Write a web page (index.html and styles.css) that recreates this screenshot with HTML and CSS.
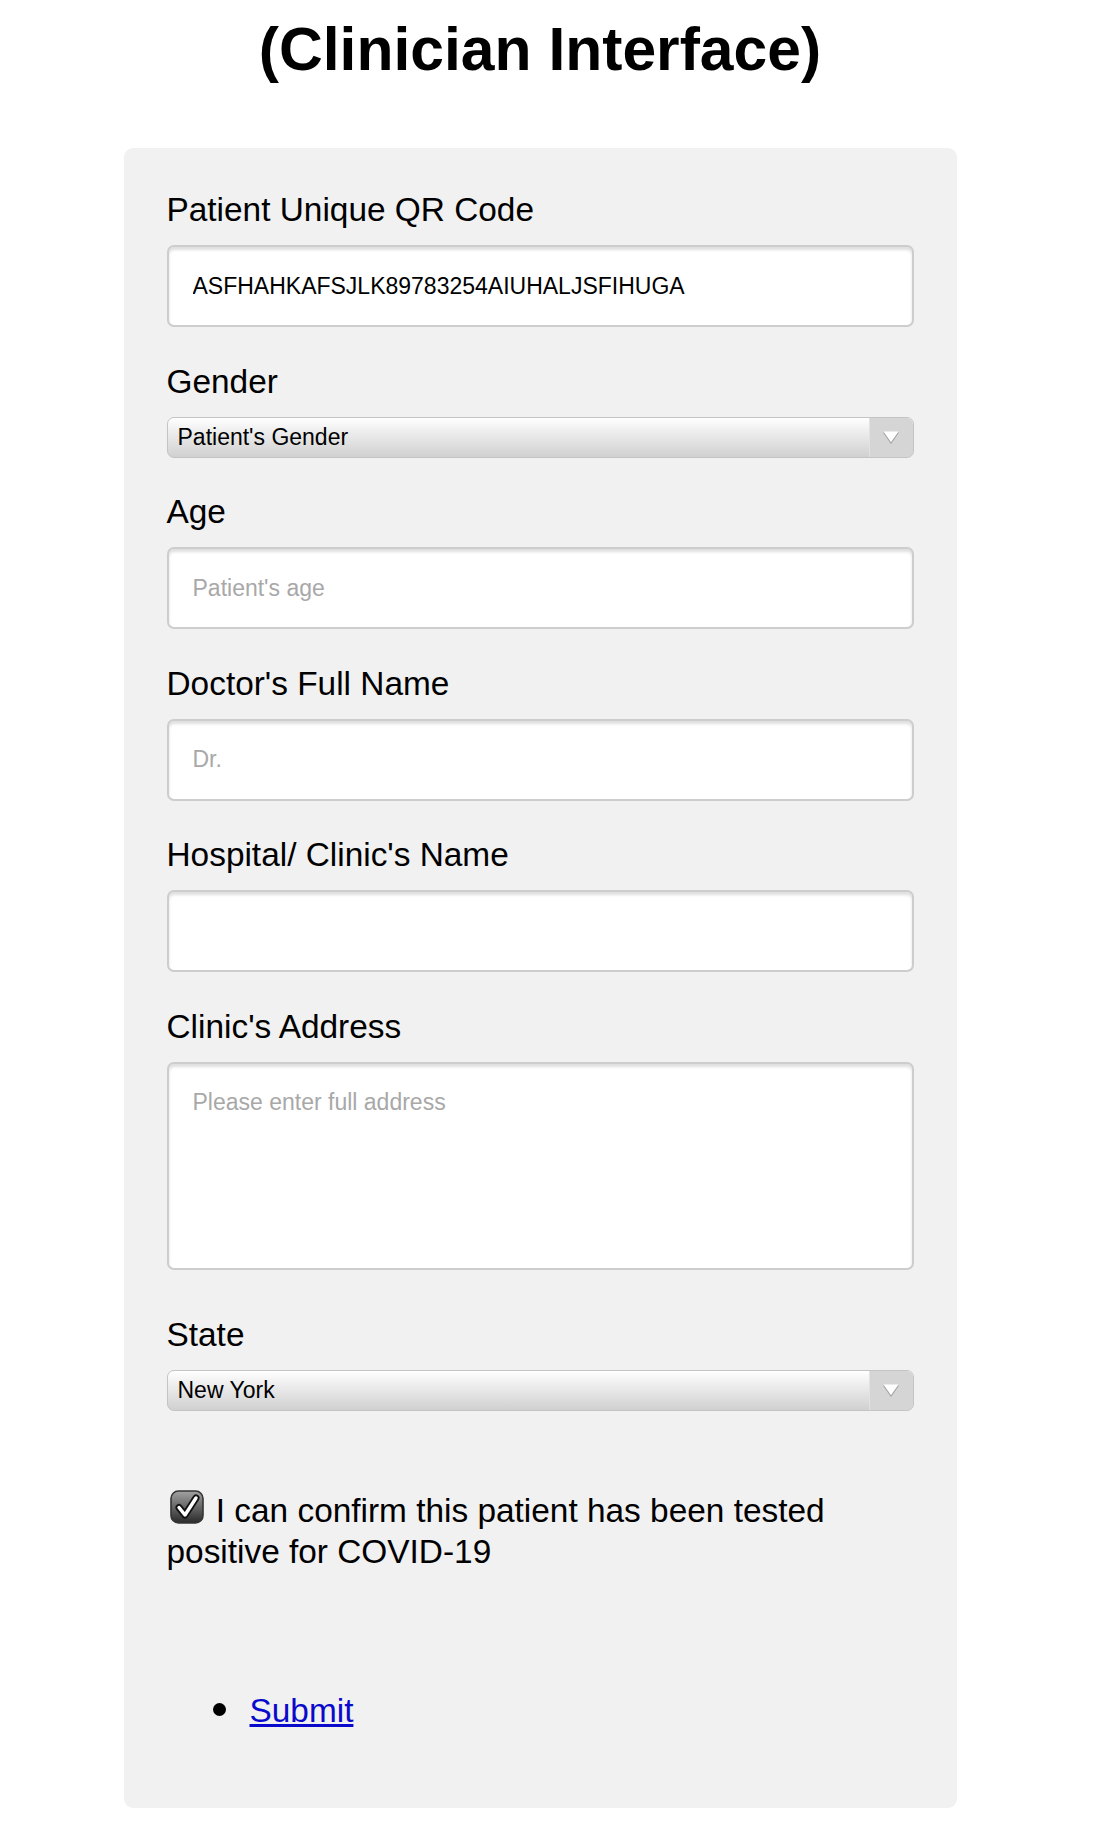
FILE: index.html
```html
<!DOCTYPE html>
<html lang="en">
<head>
<meta charset="utf-8">
<title>Clinician Interface</title>
<link rel="stylesheet" href="styles.css">
</head>
<body>
<div class="page">
  <h1 class="title">(Clinician Interface)</h1>
  <form class="panel">
    <div class="field">
      <label class="lbl" for="qr">Patient Unique QR Code</label>
      <input class="txt" id="qr" type="text" value="ASFHAHKAFSJLK89783254AIUHALJSFIHUGA">
    </div>
    <div class="field">
      <label class="lbl" for="gender">Gender</label>
      <div class="select-wrap">
        <select class="sel" id="gender">
          <option>Patient's Gender</option>
          <option>Male</option>
          <option>Female</option>
        </select>
        <span class="arrow"><svg width="18" height="15" viewBox="0 0 18 15"><polygon points="1,2.5 17,2.5 9,14" fill="#a0a0a0"/><polygon points="1.5,1.5 16.5,1.5 9,12.3" fill="#ffffff"/></svg></span>
      </div>
    </div>
    <div class="field">
      <label class="lbl" for="age">Age</label>
      <input class="txt" id="age" type="text" placeholder="Patient's age">
    </div>
    <div class="field">
      <label class="lbl" for="doc">Doctor's Full Name</label>
      <input class="txt" id="doc" type="text" placeholder="Dr.">
    </div>
    <div class="field">
      <label class="lbl" for="hosp">Hospital/ Clinic's Name</label>
      <input class="txt" id="hosp" type="text">
    </div>
    <div class="field field-area">
      <label class="lbl" for="addr">Clinic's Address</label>
      <textarea class="area" id="addr" placeholder="Please enter full address"></textarea>
    </div>
    <div class="field field-last">
      <label class="lbl" for="state">State</label>
      <div class="select-wrap">
        <select class="sel" id="state">
          <option>New York</option>
          <option>New Jersey</option>
          <option>California</option>
        </select>
        <span class="arrow"><svg width="18" height="15" viewBox="0 0 18 15"><polygon points="1,2.5 17,2.5 9,14" fill="#a0a0a0"/><polygon points="1.5,1.5 16.5,1.5 9,12.3" fill="#ffffff"/></svg></span>
      </div>
    </div>
    <div class="confirm">
      <svg class="chk" width="34" height="34" viewBox="0 0 34 34" aria-hidden="true">
        <defs>
          <linearGradient id="cg" x1="0" y1="0" x2="0" y2="1">
            <stop offset="0" stop-color="#a2a2a2"/>
            <stop offset="1" stop-color="#2a2a2a"/>
          </linearGradient>
        </defs>
        <rect x="1" y="1" width="32" height="32" rx="7.5" fill="url(#cg)" stroke="#353535" stroke-width="1.6"/>
        <path d="M9 17.5 L15 25 L26 8" fill="none" stroke="#111" stroke-width="7" stroke-linecap="round" stroke-linejoin="round"/>
        <path d="M9 17.5 L15 25 L26 8" fill="none" stroke="#fff" stroke-width="3.4" stroke-linecap="round" stroke-linejoin="round"/>
      </svg> I can confirm this patient has been tested positive for COVID-19
    </div>
    <ul class="actions">
      <li class="action"><a class="link" href="#">Submit</a></li>
    </ul>
  </form>
</div>
</body>
</html>
```
FILE: styles.css
```css
html, body {
  margin: 0;
  padding: 0;
  background: #ffffff;
}

body {
  font-family: "Liberation Sans", Arial, Helvetica, sans-serif;
  color: #000;
}

.page {
  width: 1080px;
  padding-bottom: 22px;
}

.title {
  margin: 14px 0 64px;
  font-size: 60.6px;
  line-height: 70px;
  font-weight: bold;
  text-align: center;
}

.panel {
  display: block;
  width: 833px;
  box-sizing: border-box;
  margin: 0 auto;
  padding: 42px 43px 44px;
  background: #f1f1f1;
  border-radius: 9px;
}

.field {
  margin-bottom: 34.5px;
}

.field-area {
  margin-bottom: 45px;
}

.field-last {
  margin-bottom: 0;
}

.lbl {
  display: block;
  font-size: 33.4px;
  line-height: 40px;
  margin-bottom: 15px;
  color: #000;
}

.txt,
.area {
  display: block;
  width: 100%;
  box-sizing: border-box;
  margin: 0;
  border: 2px solid #cdcdcd;
  border-radius: 7px;
  background: #fff;
  box-shadow: inset 0 3px 3px rgba(0, 0, 0, 0.13);
  font-family: "Liberation Sans", Arial, Helvetica, sans-serif;
  font-size: 23px;
  color: #000;
  outline: none;
}

.txt {
  height: 82px;
  padding: 0 24px;
}

.area {
  height: 208px;
  padding: 25px 24px;
  line-height: 27px;
  resize: none;
}

.txt::placeholder,
.area::placeholder {
  color: #a8a8a8;
  opacity: 1;
}

.select-wrap {
  position: relative;
  height: 41px;
}

.sel {
  -webkit-appearance: none;
  appearance: none;
  display: block;
  width: 100%;
  height: 41px;
  box-sizing: border-box;
  margin: 0;
  padding: 0 52px 0 10px;
  border: 1px solid #c4c4c4;
  border-radius: 7px;
  background: linear-gradient(to bottom, #ffffff 0%, #f0f0f0 30%, #d0d0d0 100%);
  font-family: "Liberation Sans", Arial, Helvetica, sans-serif;
  font-size: 23px;
  color: #000;
  outline: none;
}

.arrow {
  position: absolute;
  top: 1px;
  right: 1px;
  bottom: 1px;
  width: 43px;
  display: flex;
  align-items: center;
  justify-content: center;
  background: #d5d5d5;
  border-left: 1px solid #e2e2e2;
  border-radius: 0 6px 6px 0;
  pointer-events: none;
}

.confirm {
  margin-top: 79px;
  font-size: 33.4px;
  line-height: 41px;
}

.chk {
  display: inline-block;
  vertical-align: -2px;
  margin: 0 3px 0 3px;
}

.actions {
  margin: 118px 0 33px;
  padding-left: 46px;
  font-size: 33.4px;
  line-height: 41px;
  list-style: none;
}

.action::before {
  content: "";
  display: inline-block;
  width: 13px;
  height: 13px;
  border-radius: 50%;
  background: #000;
  vertical-align: 6px;
  margin-right: 24px;
}

.link {
  color: #0a0acc;
  text-decoration: underline;
}
```
